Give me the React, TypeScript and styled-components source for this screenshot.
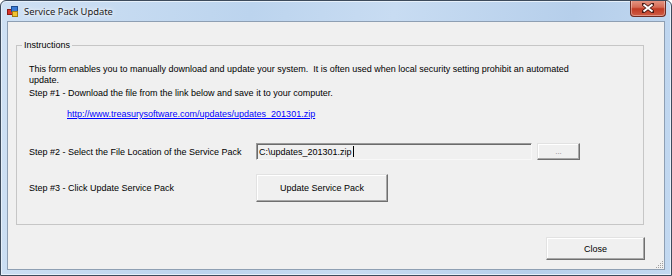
import styled, { createGlobalStyle } from 'styled-components'

const GlobalStyle = createGlobalStyle`
  html, body {
    margin: 0;
    padding: 0;
    background: #ffffff;
  }
`

const uiFont = `"Liberation Sans", Arial, sans-serif`

const Window = styled.div`
  width: 672px;
  height: 276px;
  box-sizing: border-box;
  border: 1px solid #3d4b5c;
  border-radius: 6px 6px 0 0;
  background: linear-gradient(100deg, #cfe1f4 0%, #bcd4ee 35%, #c8dcf2 55%, #b6cfeb 80%, #c3d9f1 100%);
  box-shadow: inset 0 0 0 1px #e6f0fa;
  display: flex;
  flex-direction: column;
  overflow: hidden;
`

const TitleBar = styled.div`
  height: 20px;
  display: flex;
  align-items: center;
  padding-left: 6px;
`

const TitleText = styled.span`
  font-family: "Noto Sans", "Open Sans", sans-serif;
  font-size: 9.4px;
  color: #1b1b1b;
  margin-left: 6px;
  margin-top: 1px;
  text-shadow: 0 0 6px #ffffff, 0 0 3px #ffffff;
`

const CloseButton = styled.div`
  margin-left: auto;
  margin-right: 5px;
  align-self: flex-start;
  margin-top: -1px;
  width: 36px;
  height: 17px;
  box-sizing: border-box;
  border: 1px solid #6e2b22;
  border-top: none;
  border-radius: 0 0 4px 4px;
  background: linear-gradient(#e59a88 0%, #d56b55 45%, #c13b24 55%, #cf5c45 100%);
  box-shadow: inset 0 0 0 1px rgba(255, 255, 255, 0.35);
  display: flex;
  align-items: center;
  justify-content: center;
`

const Client = styled.div`
  flex: 1;
  margin: 0 6px 5px 6px;
  border: 1px solid #8e9fb3;
  background: #f0f0f0;
  display: flex;
  flex-direction: column;
  position: relative;
  font-family: ${uiFont};
  font-size: 9px;
  color: #000;
  white-space: nowrap;
`

const GroupBox = styled.fieldset`
  margin: 17px 20px 0 8px;
  padding: 0;
  min-width: 0;
  border: 1px solid #c6c6c6;
  border-radius: 0;
`

const Legend = styled.legend`
  margin-left: 5px;
  padding: 0 2px;
  line-height: 13px;
`

const GroupBody = styled.div`
  padding: 12px 0 22px 12px;
`

const Paragraph = styled.div`
  line-height: 11px;
`

const Step = styled.div`
  line-height: 12px;
  margin-top: 1px;
`

const Link = styled.a`
  display: block;
  margin: 9px 0 0 38px;
  line-height: 12px;
  color: #0000ff;
  text-decoration: underline;
`

const Row = styled.div<{ $top: number }>`
  display: flex;
  align-items: center;
  margin-top: ${p => p.$top}px;
`

const RowLabel = styled.span`
  width: 227px;
  flex: none;
`

const TextBox = styled.div`
  width: 276px;
  height: 17px;
  box-sizing: border-box;
  border-style: solid;
  border-width: 1px;
  border-color: #9a9a9a #f8f8f8 #f8f8f8 #9a9a9a;
  box-shadow: inset 1px 1px 0 #6b6b6b;
  background: #f0f0f0;
  padding: 0 0 0 2px;
  display: flex;
  align-items: center;
`

const Caret = styled.span`
  display: inline-block;
  width: 1px;
  height: 11px;
  background: #000;
  margin-left: 1px;
`

const Button = styled.div<{ $w: number; $h: number }>`
  width: ${p => p.$w}px;
  height: ${p => p.$h}px;
  box-sizing: border-box;
  border-style: solid;
  border-width: 1px;
  border-color: #e2e2e2 #6f6f6f #6f6f6f #e2e2e2;
  box-shadow: inset -1px -1px 0 #a8a8a8, inset 1px 1px 0 #ffffff;
  background: #f0f0f0;
  display: flex;
  align-items: center;
  justify-content: center;
  flex: none;
`

const BrowseButton = styled(Button)`
  margin-left: 5px;
  color: #8a8a8a;
  font-size: 8px;
`

const Footer = styled.div`
  display: flex;
  justify-content: flex-end;
  margin: 12px 19px 0 0;
`

const Grip = styled.svg`
  position: absolute;
  right: 0;
  bottom: 0;
`

function AppIcon() {
  return (
    <svg width="11" height="11" viewBox="0 0 11 11">
      <rect x="0.5" y="3.5" width="5" height="5" fill="#d8342a" stroke="#8a1a14" />
      <rect x="4.5" y="0.5" width="6" height="5" fill="#3a7bd5" stroke="#1d4c8f" />
      <rect x="5.5" y="5.5" width="5" height="5" fill="#f1c232" stroke="#a27d12" />
    </svg>
  )
}

function CloseGlyph() {
  return (
    <svg width="12" height="10" viewBox="0 0 12 10">
      <path d="M1 1 L11 9 M11 1 L1 9" stroke="#4a1a14" strokeWidth="3.6" strokeLinecap="square" />
      <path d="M1.5 1.5 L10.5 8.5 M10.5 1.5 L1.5 8.5" stroke="#ffffff" strokeWidth="2" />
    </svg>
  )
}

function App() {
  return (
    <>
      <GlobalStyle />
      <Window>
        <TitleBar>
          <AppIcon />
          <TitleText>Service Pack Update</TitleText>
          <CloseButton>
            <CloseGlyph />
          </CloseButton>
        </TitleBar>
        <Client>
          <GroupBox>
            <Legend>Instructions</Legend>
            <GroupBody>
              <Paragraph>
                This form enables you to manually download and update your system.&nbsp; It is often used when local security setting prohibit an automated
                <br />
                update.
              </Paragraph>
              <Step>Step #1 - Download the file from the link below and save it to your computer.</Step>
              <Link href="#">http://www.treasurysoftware.com/updates/updates_201301.zip</Link>
              <Row $top={23}>
                <RowLabel>Step #2 - Select the File Location of the Service Pack</RowLabel>
                <TextBox>
                  C:\updates_201301.zip
                  <Caret />
                </TextBox>
                <BrowseButton $w={43} $h={17}>...</BrowseButton>
              </Row>
              <Row $top={14}>
                <RowLabel>Step #3 - Click Update Service Pack</RowLabel>
                <Button $w={132} $h={28}>Update Service Pack</Button>
              </Row>
            </GroupBody>
          </GroupBox>
          <Footer>
            <Button $w={99} $h={23}>Close</Button>
          </Footer>
          <Grip width="10" height="10" viewBox="0 0 10 10">
            <g fill="#a0a0a0">
              <rect x="8" y="2" width="1" height="1" />
              <rect x="6" y="4" width="1" height="1" />
              <rect x="8" y="4" width="1" height="1" />
              <rect x="4" y="6" width="1" height="1" />
              <rect x="6" y="6" width="1" height="1" />
              <rect x="8" y="6" width="1" height="1" />
              <rect x="2" y="8" width="1" height="1" />
              <rect x="4" y="8" width="1" height="1" />
              <rect x="6" y="8" width="1" height="1" />
              <rect x="8" y="8" width="1" height="1" />
            </g>
          </Grip>
        </Client>
      </Window>
    </>
  )
}

export default App
